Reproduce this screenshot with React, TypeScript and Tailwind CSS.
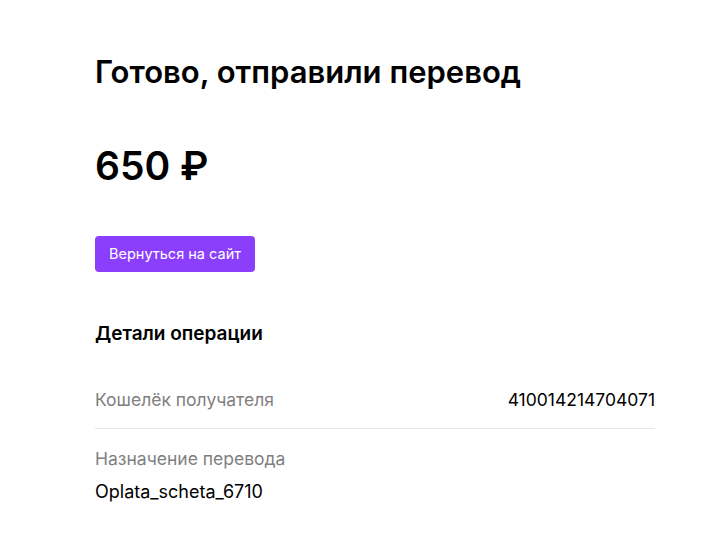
export default function App() {
  return (
    <div className="min-h-screen bg-white text-black" style={{ fontFamily: "Inter, 'Noto Sans', sans-serif" }}>
      <div className="w-[560px] ml-[95px] pt-[52px]">
        <h1 className="text-[31px] leading-[40px] font-semibold">Готово, отправили перевод</h1>
        <div className="mt-[50px] text-[39px] leading-[48px] font-semibold">650 ₽</div>
        <button className="mt-[46px] h-[36px] w-[160px] rounded-[4px] bg-[#8b3ffd] text-white text-[14.5px] leading-[36px]">
          Вернуться на сайт
        </button>
        <h2 className="mt-[50px] text-[19px] leading-[24px] font-semibold">Детали операции</h2>
        <div className="mt-[26px] flex items-center justify-between h-[57px] border-b border-[#e8e8e8]">
          <span className="text-[17.5px] text-[#7f7f7f]">Кошелёк получателя</span>
          <span className="text-[17.5px]">410014214704071</span>
        </div>
        <div className="pt-[18px]">
          <div className="text-[17.5px] leading-[24px] text-[#7f7f7f]">Назначение перевода</div>
          <div className="mt-[9px] text-[18px] leading-[24px]">Oplata_scheta_6710</div>
        </div>
      </div>
    </div>
  );
}
